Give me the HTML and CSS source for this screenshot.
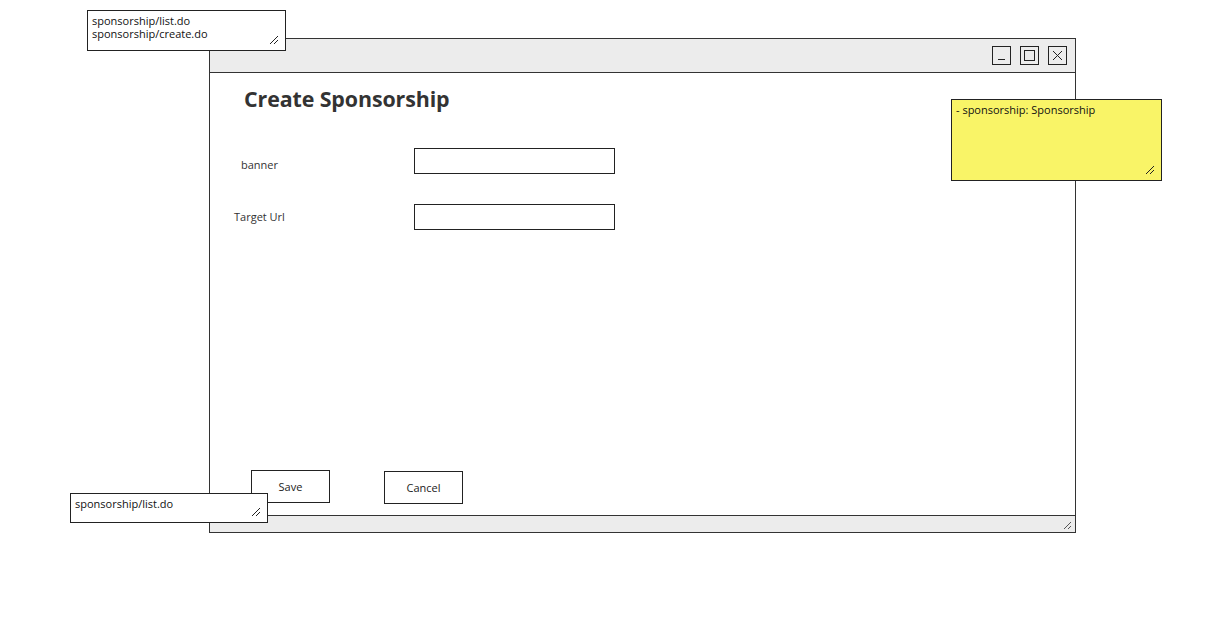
FILE: index.html
```html
<!DOCTYPE html>
<html>
<head>
<meta charset="utf-8">
<link rel="stylesheet" href="styles.css">
</head>
<body>
<div class="canvas">
  <div class="window">
    <div class="titlebar">
      <span class="wbtn"><svg width="17" height="17" viewBox="0 0 17 17"><line x1="5" y1="12.5" x2="12" y2="12.5" stroke="#222" stroke-width="1"/></svg></span>
      <span class="wbtn"><svg width="17" height="17" viewBox="0 0 17 17"><rect x="3.5" y="3.5" width="10" height="10" fill="none" stroke="#222" stroke-width="1"/></svg></span>
      <span class="wbtn"><svg width="17" height="17" viewBox="0 0 17 17"><path d="M4 4 L13 13 M13 4 L4 13" stroke="#222" stroke-width="1"/></svg></span>
    </div>
    <div class="content">
      <h1 class="heading">Create Sponsorship</h1>
      <div class="form">
        <div class="row"><span class="label label-banner">banner</span><span class="input"></span></div>
        <div class="row row2"><span class="label label-url">Target Url</span><span class="input"></span></div>
      </div>
      <div class="actions">
        <span class="btn btn-save">Save</span>
        <span class="btn btn-cancel">Cancel</span>
      </div>
    </div>
    <div class="statusbar">
      <svg class="grip" width="10" height="10" viewBox="0 0 10 10"><path d="M2 9 L9 2 M6 9 L9 6" stroke="#555" stroke-width="1"/></svg>
    </div>
  </div>

  <div class="note note-top">
    <div>sponsorship/list.do</div>
    <div>sponsorship/create.do</div>
    <svg class="grip" width="10" height="10" viewBox="0 0 10 10"><path d="M1 9 L9 1 M5 9 L9 5" stroke="#222" stroke-width="1"/></svg>
  </div>
  <div class="note note-bottom">
    <div>sponsorship/list.do</div>
    <svg class="grip" width="10" height="10" viewBox="0 0 10 10"><path d="M1 9 L9 1 M5 9 L9 5" stroke="#222" stroke-width="1"/></svg>
  </div>
  <div class="note note-yellow">
    <div>- sponsorship: Sponsorship</div>
    <svg class="grip" width="10" height="10" viewBox="0 0 10 10"><path d="M1 9 L9 1 M5 9 L9 5" stroke="#222" stroke-width="1"/></svg>
  </div>
</div>
</body>
</html>
```

FILE: styles.css
```css
* { box-sizing: border-box; }
html, body { margin: 0; padding: 0; background: #fff; }
body {
  font-family: "Open Sans", "Noto Sans", "Liberation Sans", sans-serif;
  color: #333;
  width: 1212px;
  height: 643px;
  overflow: hidden;
}
.canvas {
  position: relative;
  width: 1212px;
  height: 643px;
  padding: 38px 0 0 209px;
}
.window {
  width: 867px;
  height: 495px;
  border: 1px solid #333;
  display: flex;
  flex-direction: column;
  background: #fff;
}
.titlebar {
  height: 34px;
  background: #ececec;
  border-bottom: 1px solid #333;
  display: flex;
  justify-content: flex-end;
  align-items: flex-start;
  gap: 9px;
  padding: 7px 8px 0 0;
}
.wbtn {
  width: 19px;
  height: 19px;
  border: 1px solid #222;
  display: flex;
  align-items: center;
  justify-content: center;
}
.wbtn svg { display: block; }
.content {
  flex: 1;
  display: flex;
  flex-direction: column;
}
.heading {
  margin: 12px 0 0 34px;
  font-size: 21.4px;
  font-weight: 700;
  color: #333;
  line-height: 28px;
  letter-spacing: -0.1px;
}
.form {
  margin-top: 35px;
  display: flex;
  flex-direction: column;
}
.row {
  display: flex;
  align-items: center;
  height: 26px;
}
.row2 { margin-top: 30px; }
.label {
  font-size: 11px;
  color: #333;
  width: 204px;
}
.label-banner { padding: 7px 0 0 31px; }
.label-url { padding: 0 0 1px 24px; }
.input {
  width: 201px;
  height: 26px;
  border: 1px solid #222;
  background: #fff;
}
.actions {
  margin-top: auto;
  display: flex;
  align-items: flex-start;
  padding: 0 0 11px 41px;
}
.btn {
  width: 79px;
  height: 33px;
  border: 1px solid #222;
  display: flex;
  align-items: center;
  justify-content: center;
  font-size: 11px;
  color: #222;
  background: #fff;
}
.btn-cancel { margin: 1px 0 0 54px; }
.statusbar {
  height: 17px;
  background: #ececec;
  border-top: 1px solid #333;
  display: flex;
  justify-content: flex-end;
  align-items: flex-end;
  padding: 0 3px 2px 0;
}
.statusbar .grip { display: block; }
.note {
  position: absolute;
  border: 1px solid #222;
  background: #fff;
  font-size: 11px;
  line-height: 13px;
  color: #111;
  padding: 3px 4px;
}
.note .grip { position: absolute; right: 6px; bottom: 5px; }
.note-top { left: 87px; top: 10px; width: 199px; height: 41px; }
.note-bottom { left: 70px; top: 493px; width: 198px; height: 30px; }
.note-yellow { left: 951px; top: 99px; width: 211px; height: 82px; background: #f9f467; }
```
